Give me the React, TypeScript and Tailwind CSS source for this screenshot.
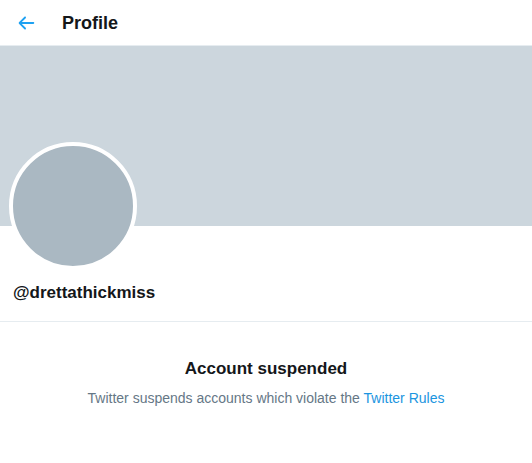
import React from 'react'

export default function App() {
  return (
    <div className="w-[532px] min-h-[463px] bg-white text-[#14171a] font-['Liberation_Sans',Arial,sans-serif]">
      {/* header */}
      <div className="h-[46px] flex items-center border-b border-[#e6ecf0]">
        <div className="w-[62px] flex justify-center pr-[10px]">
          <svg viewBox="0 0 24 24" className="w-[22px] h-[22px] fill-[#1da1f2]">
            <path d="M20 11H7.414l4.293-4.293c.39-.39.39-1.023 0-1.414s-1.023-.39-1.414 0l-6 6c-.39.39-.39 1.023 0 1.414l6 6c.195.195.45.293.707.293s.512-.098.707-.293c.39-.39.39-1.023 0-1.414L7.414 13H20c.553 0 1-.447 1-1s-.447-1-1-1z" />
          </svg>
        </div>
        <h1 className="text-[18px] font-bold leading-none">Profile</h1>
      </div>

      {/* banner */}
      <div className="h-[180px] bg-[#ccd6dd]" />

      {/* avatar + name */}
      <div className="px-[9px] -mt-[84px]">
        <div className="w-[128px] h-[128px] rounded-full border-4 border-white bg-[#aab8c2]" />
      </div>
      <div className="px-[13px] pt-[12px] pb-[17px] border-b border-[#e6ecf0]">
        <div className="text-[17px] font-bold leading-[22px]">@drettathickmiss</div>
      </div>

      {/* suspended message */}
      <div className="pt-[36px] text-center">
        <div className="text-[17px] font-bold leading-[22px]">Account suspended</div>
        <div className="mt-[8px] text-[14px] leading-[20px] text-[#657786]">
          Twitter suspends accounts which violate the{' '}
          <a href="#rules" className="text-[#1b95e0]">Twitter Rules</a>
        </div>
      </div>
    </div>
  )
}
